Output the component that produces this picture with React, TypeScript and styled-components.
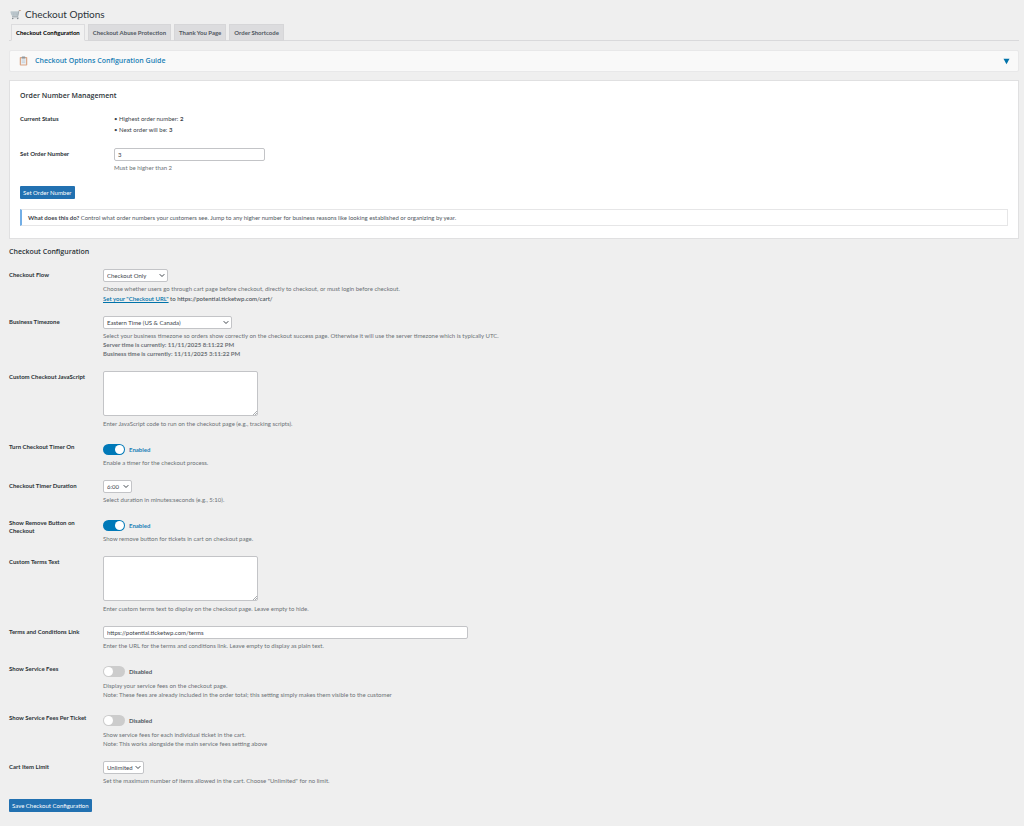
import React, { useId, useState } from 'react';
import styled, { createGlobalStyle } from 'styled-components';

const body = "Lato, 'Open Sans', sans-serif";
const display = "'Open Sans', 'Noto Sans', sans-serif";

const GlobalStyle = createGlobalStyle`
  *, *::before, *::after { box-sizing: border-box; }
  body {
    margin: 0;
    background: #efefef;
    color: #3c434a;
    font: 400 6px/9px ${body};
  }
  button, input, select, textarea { font: inherit; color: inherit; margin: 0; }
`;

const Page = styled.main`
  padding: 8px 5px 14px 9px;
`;

const PageTitle = styled.h1`
  display: flex;
  align-items: center;
  gap: 4px;
  margin: 0;
  padding-left: 1px;
  font: 400 10px/12px ${body};
  color: #2c3338;
`;

const Tabs = styled.nav`
  display: flex;
  gap: 3px;
  margin-top: 4px;
  padding-left: 2px;
  border-bottom: 1px solid #d9d9db;
`;

const Tab = styled.a<{ $active?: boolean }>`
  padding: 3px 4px;
  margin-bottom: -1px;
  border: 1px solid ${p => (p.$active ? '#dcdcde' : '#d6d6d8')};
  border-bottom-color: ${p => (p.$active ? '#efefef' : '#d6d6d8')};
  background: ${p => (p.$active ? '#f1f1f1' : '#dcdcde')};
  color: ${p => (p.$active ? '#000' : '#50575e')};
  font-weight: 700;
  text-decoration: none;
`;

const Guide = styled.button`
  display: flex;
  align-items: center;
  gap: 7px;
  width: 100%;
  margin-top: 9px;
  padding: 5px 8px 5px 9px;
  border: 1px solid #e8e8e9;
  border-radius: 2px;
  background: #f9f9f9;
  color: #1a80b6;
  font: 600 7px/10px ${display};
  text-align: left;
`;

const GuideTitle = styled.span`
  flex: 1;
`;

const Card = styled.section`
  margin-top: 8px;
  padding: 10px 10px 12px;
  border: 1px solid #e0e0e1;
  background: #fff;
`;

const Heading = styled.h2`
  margin: 0;
  font: 600 7px/10px ${display};
  color: #2c3338;
`;

const Fields = styled.div`
  display: flex;
  flex-direction: column;
  gap: 13px;
  margin-top: 12px;
`;

const FieldRow = styled.div`
  display: grid;
  grid-template-columns: 94px 1fr;
`;

const labelText = `
  padding: 2px 14px 0 0;
  font-weight: 700;
  line-height: 8px;
  color: #2c3338;
`;
const FieldLabel = styled.label`${labelText}`;
const FieldName = styled.span`${labelText}`;

const FieldBody = styled.div`
  display: flex;
  flex-direction: column;
  align-items: flex-start;
`;

const StatusList = styled.ul`
  list-style: none;
  margin: 0;
  padding: 0;
  line-height: 11px;
`;

const Hint = styled.p<{ $gap?: number }>`
  margin: ${p => p.$gap ?? 2}px 0 0;
  color: #6c7176;
`;

const Note = styled.p`
  margin: 1px 0 0;
  font-weight: 600;
  color: #50575e;
`;

const Link = styled.a`
  color: #0073aa;
`;

const TextInput = styled.input<{ $width: number }>`
  width: ${p => p.$width}px;
  max-width: 100%;
  height: 13px;
  padding: 0 3px;
  border: 1px solid #c3c4c7;
  border-radius: 2px;
  background: #fff;
`;

const AreaFrame = styled.div`
  position: relative;
  width: 155px;
  height: 45px;
`;

const Area = styled.textarea`
  display: block;
  width: 100%;
  height: 100%;
  padding: 2px 4px;
  border: 1px solid #c3c4c7;
  border-radius: 2px;
  background: #fff;
  resize: none;
`;

const Grip = styled.svg`
  position: absolute;
  right: 1px;
  bottom: 1px;
  pointer-events: none;
`;

const SelectFrame = styled.div`
  position: relative;
`;

const SelectBox = styled.select<{ $width: number }>`
  display: block;
  appearance: none;
  width: ${p => p.$width}px;
  height: 13px;
  padding: 0 8px 0 3px;
  border: 1px solid #c3c4c7;
  border-radius: 2px;
  background: #fff;
  color: #3c434a;
`;

const Chevron = styled.svg`
  position: absolute;
  right: 3px;
  top: 4px;
  pointer-events: none;
`;

const ToggleLabel = styled.label<{ $on: boolean }>`
  display: flex;
  align-items: center;
  gap: 4px;
  margin-top: 3px;
  height: 11px;
  font-weight: 700;
  color: ${p => (p.$on ? '#1a80b6' : '#50575e')};
`;

const Switch = styled.input`
  appearance: none;
  display: flex;
  width: 22px;
  height: 11px;
  padding: 1px;
  border-radius: 6px;
  background: #ccc;

  &::before {
    content: '';
    width: 9px;
    height: 9px;
    border-radius: 50%;
    background: #fff;
  }

  &:checked {
    justify-content: flex-end;
    background: #0079b8;
  }
`;

const PrimaryButton = styled.button<{ $top: number }>`
  display: block;
  margin-top: ${p => p.$top}px;
  height: 13px;
  padding: 0 3px;
  border: 0;
  border-radius: 1px;
  background: #2271b1;
  color: #fff;
`;

const Notice = styled.p`
  margin: 10px 0 0;
  padding: 3px 6px;
  border: 1px solid #e6e6e7;
  border-left: 2px solid #72aee6;
  color: #50575e;
`;

const NoticeLead = styled.b`
  color: #3c434a;
`;

const SettingsForm = styled.form`
  margin-top: 8px;
`;

function CartIcon() {
  return (
    <svg width="11" height="11" viewBox="0 0 22 22" fill="none" aria-hidden="true">
      <path d="M1.500 5.500h15.500l-1.500 7.500h-11.500z" fill="#d3dade" stroke="#a3b0b8" strokeWidth="1" />
      <path d="M2.500 8h14M3.500 10.500h12.500M6 5.500l1 7.500M10 5.500v7.500M14 5.500l-1 7.500" stroke="#9aa8b1" strokeWidth=".8" />
      <path d="M20.500 3h-2.500l-2.500 12H4" stroke="#929da5" strokeWidth="1.400" />
      <path d="M18.500 3h3" stroke="#c99a7c" strokeWidth="1.600" />
      <path d="M15.500 15l1 2.500H4.500" stroke="#929da5" strokeWidth="1" />
      <circle cx="5.500" cy="19" r="1.400" fill="#747d84" />
      <circle cx="15.500" cy="19" r="1.400" fill="#747d84" />
    </svg>
  );
}

function ClipboardIcon() {
  return (
    <svg width="9" height="10" viewBox="0 0 18 20" aria-hidden="true">
      <rect x="1.500" y="2" width="15" height="17" rx="1.500" fill="#dba888" />
      <rect x="4" y="4.500" width="10" height="12.500" fill="#e9eef3" />
      <rect x="5.500" y="1" width="7" height="4" rx="1" fill="#8f979e" />
      <path d="M5.500 8h7M5.500 10.500h7M5.500 13h7" stroke="#b3c0cc" strokeWidth="1" />
    </svg>
  );
}

function SelectField({ id, width, value }: { id: string; width: number; value: string }) {
  return (
    <SelectFrame>
      <SelectBox id={id} $width={width} defaultValue={value}>
        <option>{value}</option>
      </SelectBox>
      <Chevron width="6" height="5" viewBox="0 0 6 5" fill="none" aria-hidden="true">
        <path d="M.7 1.200L3 3.500l2.300-2.300" stroke="#3c434a" strokeWidth="1" />
      </Chevron>
    </SelectFrame>
  );
}

function AreaField({ id }: { id: string }) {
  return (
    <AreaFrame>
      <Area id={id} />
      <Grip width="4" height="4" viewBox="0 0 5 5" aria-hidden="true">
        <path d="M0 5L5 0M2.500 5L5 2.500" stroke="#8c8f94" strokeWidth=".9" />
      </Grip>
    </AreaFrame>
  );
}

type ToggleRowProps = { name: string; initial: boolean; hintGap?: number; children: React.ReactNode };

function ToggleRow({ name, initial, hintGap = 3, children }: ToggleRowProps) {
  const [on, setOn] = useState(initial);
  const id = useId();
  return (
    <FieldRow>
      <FieldLabel htmlFor={id}>{name}</FieldLabel>
      <FieldBody>
        <ToggleLabel $on={on}>
          <Switch id={id} type="checkbox" checked={on} onChange={e => setOn(e.target.checked)} />
          {on ? 'Enabled' : 'Disabled'}
        </ToggleLabel>
        <Hint $gap={hintGap}>{children}</Hint>
      </FieldBody>
    </FieldRow>
  );
}

export default function App() {
  return (
    <>
      <GlobalStyle />
      <Page>
        <PageTitle><CartIcon />Checkout Options</PageTitle>
        <Tabs>
          <Tab href="#configuration" $active>Checkout Configuration</Tab>
          <Tab href="#abuse">Checkout Abuse Protection</Tab>
          <Tab href="#thanks">Thank You Page</Tab>
          <Tab href="#shortcode">Order Shortcode</Tab>
        </Tabs>

        <Guide type="button">
          <ClipboardIcon />
          <GuideTitle>Checkout Options Configuration Guide</GuideTitle>
          <svg width="7" height="7" viewBox="0 0 7 7" aria-hidden="true">
            <path d="M.5 .7h6L3.500 6.300z" fill="#0073aa" />
          </svg>
        </Guide>

        <Card>
          <Heading>Order Number Management</Heading>
          <Fields>
            <FieldRow>
              <FieldName>Current Status</FieldName>
              <StatusList>
                <li>• Highest order number: <b>2</b></li>
                <li>• Next order will be: <b>3</b></li>
              </StatusList>
            </FieldRow>
            <FieldRow>
              <FieldLabel htmlFor="order-number">Set Order Number</FieldLabel>
              <FieldBody>
                <TextInput id="order-number" $width={151} defaultValue="3" />
                <Hint>Must be higher than 2</Hint>
              </FieldBody>
            </FieldRow>
          </Fields>
          <PrimaryButton type="button" $top={14}>Set Order Number</PrimaryButton>
          <Notice>
            <NoticeLead>What does this do?</NoticeLead> Control what order numbers your customers see. Jump to any higher number for
            business reasons like looking established or organizing by year.
          </Notice>
        </Card>

        <SettingsForm onSubmit={e => e.preventDefault()}>
          <Heading>Checkout Configuration</Heading>
          <Fields>
            <FieldRow>
              <FieldLabel htmlFor="flow">Checkout Flow</FieldLabel>
              <FieldBody>
                <SelectField id="flow" width={65} value="Checkout Only" />
                <Hint>Choose whether users go through cart page before checkout, directly to checkout, or must login before checkout.</Hint>
                <Note><Link href="#checkout-url">Set your "Checkout URL"</Link> to https://potential.ticketwp.com/cart/</Note>
              </FieldBody>
            </FieldRow>
            <FieldRow>
              <FieldLabel htmlFor="timezone">Business Timezone</FieldLabel>
              <FieldBody>
                <SelectField id="timezone" width={129} value="Eastern Time (US &amp; Canada)" />
                <Hint>
                  Select your business timezone so orders show correctly on the checkout success page. Otherwise it will use the server timezone which is typically UTC.<br />
                  <b>Server time is currently: 11/11/2025 8:11:22 PM</b><br />
                  <b>Business time is currently: 11/11/2025 3:11:22 PM</b>
                </Hint>
              </FieldBody>
            </FieldRow>
            <FieldRow>
              <FieldLabel htmlFor="script">Custom Checkout JavaScript</FieldLabel>
              <FieldBody>
                <AreaField id="script" />
                <Hint $gap={3}>Enter JavaScript code to run on the checkout page (e.g., tracking scripts).</Hint>
              </FieldBody>
            </FieldRow>
            <ToggleRow name="Turn Checkout Timer On" initial>Enable a timer for the checkout process.</ToggleRow>
            <FieldRow>
              <FieldLabel htmlFor="duration">Checkout Timer Duration</FieldLabel>
              <FieldBody>
                <SelectField id="duration" width={29} value="6:00" />
                <Hint>Select duration in minutes:seconds (e.g., 5:10).</Hint>
              </FieldBody>
            </FieldRow>
            <ToggleRow name="Show Remove Button on Checkout" initial>Show remove button for tickets in cart on checkout page.</ToggleRow>
            <FieldRow>
              <FieldLabel htmlFor="terms-text">Custom Terms Text</FieldLabel>
              <FieldBody>
                <AreaField id="terms-text" />
                <Hint $gap={3}>Enter custom terms text to display on the checkout page. Leave empty to hide.</Hint>
              </FieldBody>
            </FieldRow>
            <FieldRow>
              <FieldLabel htmlFor="terms-link">Terms and Conditions Link</FieldLabel>
              <FieldBody>
                <TextInput id="terms-link" type="url" $width={365} defaultValue="https://potential.ticketwp.com/terms" />
                <Hint>Enter the URL for the terms and conditions link. Leave empty to display as plain text.</Hint>
              </FieldBody>
            </FieldRow>
            <ToggleRow name="Show Service Fees" initial={false} hintGap={4}>
              Display your service fees on the checkout page.<br />
              Note: These fees are already included in the order total; this setting simply makes them visible to the customer
            </ToggleRow>
            <ToggleRow name="Show Service Fees Per Ticket" initial={false} hintGap={4}>
              Show service fees for each individual ticket in the cart.<br />
              Note: This works alongside the main service fees setting above
            </ToggleRow>
            <FieldRow>
              <FieldLabel htmlFor="limit">Cart Item Limit</FieldLabel>
              <FieldBody>
                <SelectField id="limit" width={41} value="Unlimited" />
                <Hint>Set the maximum number of items allowed in the cart. Choose "Unlimited" for no limit.</Hint>
              </FieldBody>
            </FieldRow>
          </Fields>
          <PrimaryButton type="submit" $top={14}>Save Checkout Configuration</PrimaryButton>
        </SettingsForm>
      </Page>
    </>
  );
}
